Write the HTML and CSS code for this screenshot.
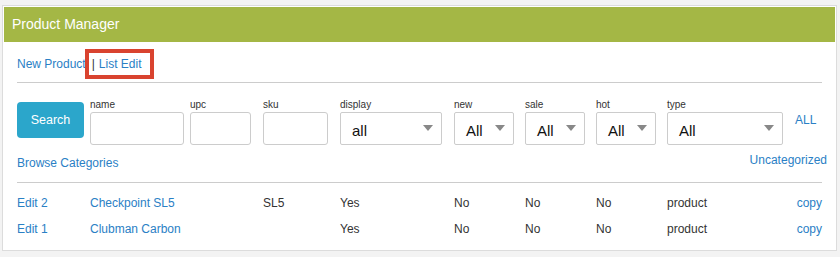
FILE: index.html
```html
<!DOCTYPE html>
<html lang="en">
<head>
    <meta charset="UTF-8">
    <meta name="viewport" content="width=device-width, initial-scale=1.0">
    <title>Product Manager</title>
    <link rel="stylesheet" href="styles.css">
</head>
<body>
    <div class="panel">
        <div class="panel-heading">Product Manager</div>
        <div class="panel-body">
            <div class="nav">
                <a href="#">New Product</a>
                <span class="highlight"><span class="sep">|</span> <a href="#">List Edit</a></span>
            </div>

            <form class="filters cols" onsubmit="return false">
                <div><button type="submit" class="search">Search</button></div>
                <div class="field">
                    <label for="name">name</label>
                    <input type="text" id="name" class="w-name">
                </div>
                <div class="field">
                    <label for="upc">upc</label>
                    <input type="text" id="upc" class="w-upc">
                </div>
                <div class="field">
                    <label for="sku">sku</label>
                    <input type="text" id="sku" class="w-sku">
                </div>
                <div class="field">
                    <label>display</label>
                    <div class="select w-display"><span>all</span><i class="caret"></i></div>
                </div>
                <div class="field">
                    <label>new</label>
                    <div class="select w-small"><span>All</span><i class="caret"></i></div>
                </div>
                <div class="field">
                    <label>sale</label>
                    <div class="select w-small"><span>All</span><i class="caret"></i></div>
                </div>
                <div class="field">
                    <label>hot</label>
                    <div class="select w-small"><span>All</span><i class="caret"></i></div>
                </div>
                <div class="field">
                    <label>type</label>
                    <div class="select w-type"><span>All</span><i class="caret"></i></div>
                </div>
                <div><a href="#" class="all-link">ALL</a></div>
            </form>

            <div class="categories">
                <a href="#" class="browse">Browse Categories</a>
                <a href="#" class="uncat">Uncategorized</a>
            </div>

            <div class="products">
                <div class="cols row">
                    <a href="#">Edit 2</a>
                    <a href="#">Checkpoint SL5</a>
                    <span></span>
                    <span>SL5</span>
                    <span>Yes</span>
                    <span>No</span>
                    <span>No</span>
                    <span>No</span>
                    <span>product</span>
                    <a href="#" class="copy">copy</a>
                </div>
                <div class="cols row">
                    <a href="#">Edit 1</a>
                    <a href="#">Clubman Carbon</a>
                    <span></span>
                    <span></span>
                    <span>Yes</span>
                    <span>No</span>
                    <span>No</span>
                    <span>No</span>
                    <span>product</span>
                    <a href="#" class="copy">copy</a>
                </div>
            </div>
        </div>
    </div>
</body>
</html>
```

FILE: styles.css
```css
body {
    font-family: "Liberation Sans", Arial, sans-serif;
    font-size: 12px;
    color: #333;
    margin: 0;
    padding-top: 5px;
    background-color: #f3f3f3;
}
a {
    color: #2a80c5;
    text-decoration: none;
}
.panel {
    margin: 0 3px 0 2px;
    padding: 1px;
    border: 1px solid #dcdcdc;
    background: #fff;
}
.panel-heading {
    height: 35px;
    line-height: 35px;
    padding-left: 8px;
    background-color: #a4b745;
    color: #fff;
    font-size: 14px;
}
.panel-body {
    padding: 0 13px 7px 13px;
}
.nav {
    display: flex;
    align-items: center;
    margin-top: 7px;
    padding-bottom: 3px;
    border-bottom: 1px solid #ccc;
}
.highlight {
    display: inline-flex;
    align-items: center;
    height: 22px;
    margin-left: -1px;
    padding: 0 8px 0 3px;
    border: 4px solid #d9432f;
    background: #fff;
}
.sep {
    color: #333;
    margin-right: 4px;
}
.cols {
    display: grid;
    grid-template-columns: 73px 100px 73px 77px 114px 71px 71px 71px 128px 1fr;
}
.filters {
    margin: 16px 0 0 0;
}
.field label {
    display: block;
    font-size: 10px;
    line-height: 12px;
    height: 13px;
    color: #333;
}
.search {
    width: 67px;
    height: 36px;
    margin-top: 3px;
    border: none;
    border-radius: 4px;
    background-color: #2ba6cb;
    color: #fff;
    font-family: inherit;
    font-size: 12.5px;
    cursor: pointer;
}
input {
    box-sizing: border-box;
    height: 33px;
    border: 1px solid #ccc;
    border-radius: 3px;
    padding: 0 6px;
}
.w-name { width: 94px; }
.w-upc { width: 61px; }
.w-sku { width: 65px; }
.select {
    box-sizing: border-box;
    display: flex;
    align-items: center;
    justify-content: space-between;
    height: 33px;
    padding: 3px 8px 0 11px;
    border: 1px solid #ccc;
    border-radius: 2px;
    font-size: 15px;
    color: #111;
}
.w-display { width: 102px; }
.w-small { width: 60px; }
.w-type { width: 116px; }
.caret {
    width: 0;
    height: 0;
    margin-top: -4px;
    border-left: 5px solid transparent;
    border-right: 5px solid transparent;
    border-top: 6px solid #888;
}
.all-link {
    display: block;
    margin-top: 14px;
    line-height: 14px;
}
.categories {
    display: flex;
    justify-content: space-between;
    align-items: flex-start;
    margin-top: 7px;
    padding-bottom: 11px;
    border-bottom: 1px solid #ccc;
    line-height: 16px;
}
.browse {
    margin-top: 3px;
}
.uncat {
    margin-right: -5px;
}
.products {
    margin-top: 7px;
}
.row {
    line-height: 26px;
}
.copy {
    text-align: right;
}
```
